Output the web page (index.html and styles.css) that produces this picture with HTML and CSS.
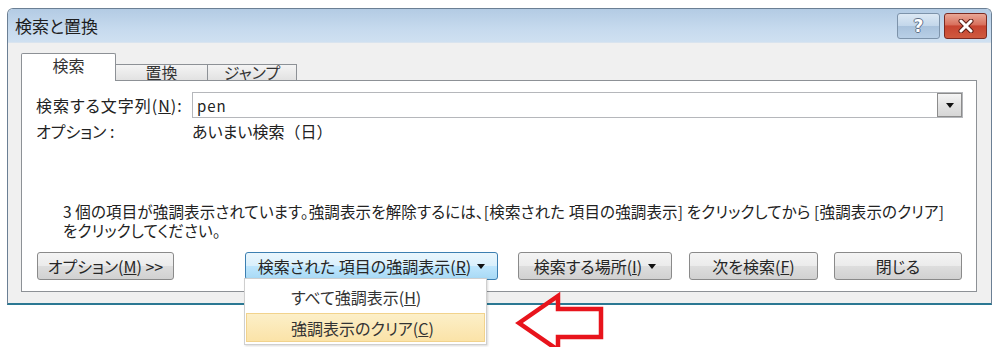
FILE: index.html
```html
<!DOCTYPE html>
<html lang="ja">
  <head>
    <meta charset="utf-8">
    <title>検索と置換</title>
    <link rel="stylesheet" href="styles.css">
  </head>
  <body>
    <div class="stage">
      <div class="window">
        <div class="titlebar">
          <span class="title">検索と置換</span>
          <div class="caption-buttons">
            <div class="cap-btn help">?</div>
            <div class="cap-btn close">
              <svg width="18" height="14" viewBox="0 0 18 14">
                <path d="M4 2 L14 12 M14 2 L4 12" stroke="#5a1d14" stroke-width="5" stroke-linecap="round"/>
                <path d="M4 2 L14 12 M14 2 L4 12" stroke="#ffffff" stroke-width="3" stroke-linecap="round"/>
              </svg>
            </div>
          </div>
        </div>

        <div class="client">
          <div class="tabs">
            <div class="tab active">検索</div>
            <div class="tab tab-replace">置換</div>
            <div class="tab tab-jump">ジャンプ</div>
          </div>

          <div class="panel">
            <div class="row">
              <span class="label wide">検索する文字列(<u>N</u>):</span>
              <div class="combo">
                <span class="combo-text">pen</span>
                <span class="combo-btn"><span class="caret"></span></span>
              </div>
            </div>
            <div class="row row-options">
              <span class="label">オプション :</span>
              <span>あいまい検索<span class="full">（日）</span></span>
            </div>

            <p class="message">
              3 個の項目が強調表示されています。強調表示を解除するには、[検索された 項目の強調表示] をクリックしてから [強調表示のクリア]<br>
              をクリックしてください。
            </p>

            <div class="buttons">
              <div class="btn btn-options">オプション(<u>M</u>) &gt;&gt;</div>
              <div class="btn btn-highlight">検索された 項目の強調表示(<u>R</u>)<span class="caret"></span></div>
              <div class="btn btn-where">検索する場所(<u>I</u>)<span class="caret"></span></div>
              <div class="btn btn-next">次を検索(<u>F</u>)</div>
              <div class="btn btn-close">閉じる</div>
            </div>
          </div>
        </div>
      </div>

      <div class="menu">
        <div class="menu-item">すべて強調表示(<u>H</u>)</div>
        <div class="menu-item hover">強調表示のクリア(<u>C</u>)</div>
      </div>

      <svg class="arrow" width="92" height="58" viewBox="0 0 92 58">
        <polygon points="4,31 43,4 43,17 86,17 86,45 43,45 43,58" fill="none" stroke="#e8141c" stroke-width="4.5" stroke-linejoin="miter"/>
      </svg>
    </div>
  </body>
</html>
```

FILE: styles.css
```css
body {
  margin: 0;
  background: #ffffff;
  font-family: "Noto Sans CJK JP", "Noto Sans", sans-serif;
  font-size: 16px;
  font-feature-settings: "palt";
  color: #222222;
}
u {
  text-decoration: underline;
  text-underline-offset: 1px;
}
.stage {
  position: relative;
  width: 997px;
  height: 347px;
  overflow: hidden;
  padding: 8px 0 0 7px;
  box-sizing: border-box;
}
.window {
  width: 985px;
  height: 297px;
  box-sizing: border-box;
  border: 1px solid #6b7f94;
  border-bottom: 2px solid #2b7893;
  border-radius: 6px 6px 0 0;
  display: flex;
  flex-direction: column;
  overflow: hidden;
}

/* title bar */
.titlebar {
  height: 33px;
  flex: none;
  display: flex;
  justify-content: space-between;
  align-items: flex-start;
  padding: 0 4px 0 7px;
  background: linear-gradient(to bottom, #b3cbe4, #c6daee 60%, #cfe0f1);
  border-bottom: 1px solid #d9e4ef;
}
.title {
  line-height: 34px;
  font-size: 17px;
  color: #1e1e1e;
}
.caption-buttons {
  display: flex;
  gap: 4px;
  margin-top: 4px;
}
.cap-btn {
  width: 43px;
  height: 26px;
  box-sizing: border-box;
  border-radius: 3px;
  display: flex;
  align-items: center;
  justify-content: center;
}
.help {
  border: 1px solid #7d93aa;
  background: linear-gradient(to bottom, #dce8f4, #c2d6ea 50%, #a9c2dc 51%, #b8cfe6);
  color: #ffffff;
  font-family: "DejaVu Sans", sans-serif;
  font-weight: bold;
  font-size: 17px;
  text-shadow: -1px 0 #5f7189, 1px 0 #5f7189, 0 -1px #5f7189, 0 1px #5f7189;
}
.close {
  border: 1px solid #7b2b22;
  background: linear-gradient(to bottom, #e9a796, #d8705d 45%, #c74431 50%, #cf5a3f);
}

/* client area */
.client {
  flex: 1;
  background: #f0f0f0;
  padding: 10px 14px 11px 13px;
  display: flex;
  flex-direction: column;
}
.tabs {
  display: flex;
  align-items: flex-end;
  height: 27px;
}
.tab {
  box-sizing: border-box;
  height: 16px;
  border: 1px solid #8d9196;
  border-bottom: none;
  background: linear-gradient(to bottom, #f4f4f4, #e2e2e2);
  text-align: center;
  line-height: 15px;
  color: #333333;
  margin-left: -1px;
}
.tab.active {
  width: 95px;
  height: 28px;
  margin-left: 0;
  margin-bottom: -1px;
  background: #ffffff;
  border-radius: 2px 2px 0 0;
  line-height: 22px;
  position: relative;
  z-index: 1;
}
.tab-replace {
  width: 93px;
}
.tab-jump {
  width: 90px;
}
.panel {
  flex: 1;
  background: #ffffff;
  border: 1px solid #8d9196;
  padding: 11px 13px 11px 14px;
  display: flex;
  flex-direction: column;
}
.row {
  display: flex;
  align-items: center;
}
.label {
  width: 156px;
  flex: none;
}
.label.wide {
  letter-spacing: 1px;
}
.full {
  font-feature-settings: normal;
}
.combo {
  flex: 1;
  height: 26px;
  box-sizing: border-box;
  border: 1px solid #b5b7bb;
  display: flex;
  align-items: center;
  justify-content: space-between;
  padding: 0 0 0 4px;
}
.combo-text {
  font-size: 15px;
  letter-spacing: 1px;
}
.combo-btn {
  width: 25px;
  height: 24px;
  box-sizing: border-box;
  border: 1px solid #8c8c8c;
  background: linear-gradient(to bottom, #f5f5f5, #e3e3e3 50%, #d6d6d6);
  display: flex;
  align-items: center;
  justify-content: center;
}
.caret {
  display: inline-block;
  width: 0;
  height: 0;
  border-left: 4px solid transparent;
  border-right: 4px solid transparent;
  border-top: 5px solid #111111;
  margin-left: 6px;
  vertical-align: middle;
}
.combo-btn .caret {
  margin-left: 0;
}
.row-options {
  margin-top: 3px;
  line-height: 20px;
}
.message {
  margin: auto 0 0 27px;
  font-size: 15.5px;
  letter-spacing: 0.15px;
  line-height: 19px;
}
.buttons {
  display: flex;
  margin-top: 12px;
  margin-left: 1px;
}
.btn {
  height: 28px;
  box-sizing: border-box;
  border: 1px solid #8a8a8a;
  border-radius: 3px;
  background: linear-gradient(to bottom, #f4f4f4, #ebebeb 50%, #dddddd 51%, #d1d1d1);
  display: flex;
  align-items: center;
  justify-content: center;
  color: #262626;
}
.btn-options {
  width: 137px;
}
.btn-highlight {
  width: 253px;
  margin-left: 71px;
  border-color: #3c7fb1;
  background: linear-gradient(to bottom, #eaf6fd, #d9f0fc 50%, #bee6fd 51%, #a7d9f5);
}
.btn-where {
  width: 154px;
  margin-left: 20px;
}
.btn-next {
  width: 129px;
  margin-left: 17px;
}
.btn-close {
  width: 128px;
  margin-left: 16px;
}

/* dropdown menu over the dialog */
.menu {
  position: absolute;
  left: 244px;
  top: 278px;
  width: 243px;
  height: 67px;
  box-sizing: border-box;
  background: #ffffff;
  border: 1px solid #cfcfcf;
  box-shadow: 1px 1px 2px rgba(0, 0, 0, 0.15);
  padding: 4px 1px 2px;
}
.menu-item {
  height: 29px;
  box-sizing: border-box;
  padding-left: 45px;
  line-height: 28px;
  color: #333333;
}
.menu-item + .menu-item {
  margin-top: 1px;
}
.menu-item.hover {
  background: linear-gradient(to bottom, #fcefc8, #fbe3a8);
  border: 1px solid #f2d38c;
  padding-left: 44px;
}
.arrow {
  position: absolute;
  left: 515px;
  top: 292px;
}
```
